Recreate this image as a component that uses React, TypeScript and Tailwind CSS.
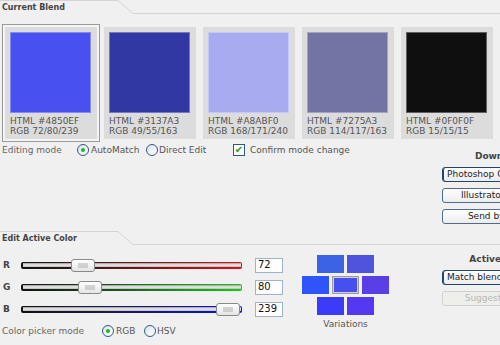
import React from 'react';

const font = { fontFamily: '"DejaVu Sans", Verdana, sans-serif' };

const swatches = [
  { hex: '4850EF', rgb: '72/80/239', color: 'bg-[#4850ef]', active: true },
  { hex: '3137A3', rgb: '49/55/163', color: 'bg-[#3137a3]' },
  { hex: 'A8ABF0', rgb: '168/171/240', color: 'bg-[#a8abf0]' },
  { hex: '7275A3', rgb: '114/117/163', color: 'bg-[#7275a3]' },
  { hex: '0F0F0F', rgb: '15/15/15', color: 'bg-[#0f0f0f]' },
];

const sliders = [
  { label: 'R', value: 72, edge: 'bg-[linear-gradient(to_right,#111,#3a1a1a_30%,#e01010)]' },
  { label: 'G', value: 80, edge: 'bg-[linear-gradient(to_right,#111,#1a3a1a_30%,#10d010)]' },
  { label: 'B', value: 239, edge: 'bg-[linear-gradient(to_right,#111,#1a1a3a_30%,#1010e0)]' },
];

function SectionHeader({ title }: { title: string }) {
  return (
    <div className="flex h-[14px] shrink-0">
      <div className="w-[118px] shrink-0 border-t border-[#d4d4d4] pl-[2px] pt-[2px] text-[8px] font-bold leading-[10px] text-[#444]">
        {title}
      </div>
      <svg width="15" height="14" className="shrink-0">
        <line x1="0" y1="0.5" x2="15" y2="13.5" stroke="#d4d4d4" />
      </svg>
      <div className="flex-1 border-b border-[#d4d4d4]" />
    </div>
  );
}

function Radio({ checked }: { checked?: boolean }) {
  return (
    <span className="flex h-[12px] w-[12px] shrink-0 items-center justify-center rounded-full border border-[#2d5a85] bg-[linear-gradient(135deg,#dde3ea,#fff)]">
      {checked && <span className="h-[4px] w-[4px] rounded-full bg-[#22b422]" />}
    </span>
  );
}

function Button({ children, focus, disabled, left }: { children: React.ReactNode; focus?: boolean; disabled?: boolean; left?: boolean }) {
  return (
    <div
      className={`flex h-[15px] w-[116px] shrink-0 items-center whitespace-nowrap rounded-[3px] border text-[9px] leading-none ${
        left ? 'pl-[4px]' : 'justify-center'
      } ${
        disabled
          ? 'border-[#d0d0d0] bg-[#eeeeea] text-[#b8b8b8]'
          : focus
          ? 'border-[#23466b] bg-[linear-gradient(#fff,#ececec)] text-[#222] shadow-[inset_1px_0_0_#23466b]'
          : 'border-[#4d6b8c] bg-[linear-gradient(#fff,#ececec)] text-[#222]'
      }`}
    >
      {children}
    </div>
  );
}

export default function App() {
  return (
    <div style={font} className="flex h-[345px] w-[500px] flex-col overflow-hidden bg-[#f0f0f0] text-[9px] leading-[10px] text-[#555]">
      <SectionHeader title="Current Blend" />

      {/* blend swatches */}
      <div className="mt-[13px] flex gap-[7px] pl-[5px]">
        {swatches.map((s) => (
          <div
            key={s.hex}
            className={`h-[112px] w-[92px] shrink-0 bg-[#dcdcdc] pl-[5px] pt-[5px] ${
              s.active ? 'shadow-[0_0_0_2px_#f4f4f4,0_0_0_3px_#9a9a9a]' : ''
            }`}
          >
            <div className={`h-[81px] w-[81px] border border-[#ffffff55] ${s.color}`} />
            <div className="mt-[3px] text-[#555]">HTML #{s.hex}</div>
            <div className="text-[#555]">RGB {s.rgb}</div>
          </div>
        ))}
      </div>

      <div className="flex h-[92px] shrink-0">
        <div className="flex h-[22px] flex-1 items-center pl-[2px] text-[#666]">
          <span className="w-[75px]">Editing mode</span>
          <Radio checked />
          <span className="ml-[2px] w-[55px] text-[#555]">AutoMatch</span>
          <Radio />
          <span className="ml-[1px] w-[74px] text-[#555]">Direct Edit</span>
          <span className="flex h-[12px] w-[12px] items-center justify-center border border-[#2d5a85] bg-white text-[10px] font-bold text-[#1c9a1c]">
            ✔
          </span>
          <span className="ml-[5px] text-[#555]">Confirm mode change</span>
        </div>
        <div className="flex w-[58px] shrink-0 flex-col gap-[6px] pt-[12px]">
          <div className="w-[116px] text-center text-[9px] font-bold text-[#444]">Download</div>
          <div className="flex flex-col gap-[6px]">
            <Button focus left>Photoshop CS2 swatch</Button>
            <Button>Illustrator swatch</Button>
            <Button>Send by email</Button>
          </div>
        </div>
      </div>

      <SectionHeader title="Edit Active Color" />

      <div className="flex pt-[9px]">
        <div className="flex flex-col">
          {sliders.map((s) => (
            <div key={s.label} className="flex h-[22px] items-center">
              <span className="w-[21px] pl-[3px] font-bold text-[#444]">{s.label}</span>
              <div className={`relative h-[7px] w-[221px] rounded-[2px] p-[1.5px] ${s.edge}`}>
                <div className="h-full w-full bg-[linear-gradient(#9a9a9a,#eeeeee_50%,#b8b8b8)]" />
                <div
                  className="absolute top-[-3px] flex h-[13px] w-[24px] items-center justify-center rounded-[3px] border border-[#8a8a8a] bg-[linear-gradient(#fff,#e4e4e4)]"
                  style={{ left: Math.round(s.value * 0.868 - 12.5) }}
                >
                  <div className="h-[5px] w-[10px] bg-[radial-gradient(#aaa_0.6px,transparent_0.8px)] bg-[length:2px_2px]" />
                </div>
              </div>
              <div className="ml-[13px] flex h-[15px] w-[28px] items-center border border-[#9fb3c8] bg-white pl-[2px] text-[10px] text-[#111]">
                {s.value}
              </div>
            </div>
          ))}
          <div className="flex h-[22px] items-center pl-[2px] text-[#666]">
            <span className="w-[100px]">Color picker mode</span>
            <Radio checked />
            <span className="ml-[2px] w-[28px] text-[#555]">RGB</span>
            <Radio />
            <span className="ml-[1px] text-[#555]">HSV</span>
          </div>
        </div>

        {/* variations */}
        <div className="ml-[19px] flex w-[87px] flex-col items-center gap-[3px] pt-[1px]">
          <div className="flex gap-[3px]">
            <div className="h-[18px] w-[27px] bg-[#3c62e6]" />
            <div className="h-[18px] w-[27px] bg-[#4e55dc]" />
          </div>
          <div className="flex gap-[3px]">
            <div className="h-[18px] w-[27px] bg-[#2f55fa]" />
            <div className="h-[18px] w-[27px] border border-[#9a9a9a] bg-[#4650ee] shadow-[inset_0_0_0_1px_#cfcfe8]" />
            <div className="h-[18px] w-[27px] bg-[#5a3ee6]" />
          </div>
          <div className="flex gap-[3px]">
            <div className="h-[18px] w-[27px] bg-[#3c3cf8]" />
            <div className="h-[18px] w-[27px] bg-[#5438f2]" />
          </div>
          <div className="mt-[1px] text-[#555]">Variations</div>
        </div>

        <div className="ml-[53px] flex flex-col gap-[6px]">
          <div className="w-[116px] text-center font-bold text-[#444]">Active Color</div>
          <Button focus left>Match blend to active</Button>
          <Button disabled>Suggest Palette</Button>
        </div>
      </div>
    </div>
  );
}
